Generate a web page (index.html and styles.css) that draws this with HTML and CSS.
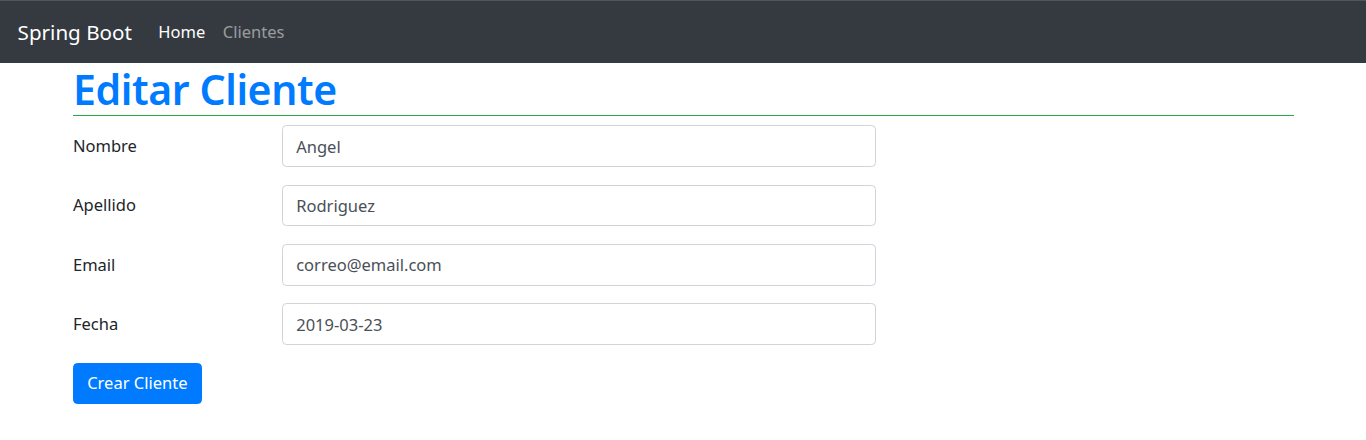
FILE: index.html
```html
<!DOCTYPE html>
<html lang="es">
<head>
<meta charset="utf-8">
<title>Editar Cliente</title>
<link rel="stylesheet" href="styles.css">
</head>
<body>
<nav class="navbar">
  <a class="brand" href="#">Spring Boot</a>
  <ul class="nav">
    <li><a class="nav-link active" href="#">Home</a></li>
    <li><a class="nav-link" href="#">Clientes</a></li>
  </ul>
</nav>
<main class="container">
  <h1 class="title">Editar Cliente</h1>
  <form class="form">
    <div class="row">
      <label class="label" for="nombre">Nombre</label>
      <div class="field"><input class="control" id="nombre" type="text" value="Angel"></div>
    </div>
    <div class="row">
      <label class="label" for="apellido">Apellido</label>
      <div class="field"><input class="control" id="apellido" type="text" value="Rodriguez"></div>
    </div>
    <div class="row">
      <label class="label" for="email">Email</label>
      <div class="field"><input class="control" id="email" type="text" value="correo@email.com"></div>
    </div>
    <div class="row">
      <label class="label" for="fecha">Fecha</label>
      <div class="field"><input class="control" id="fecha" type="text" value="2019-03-23"></div>
    </div>
    <div class="actions">
      <button class="btn" type="button">Crear Cliente</button>
    </div>
  </form>
</main>
</body>
</html>
```

FILE: styles.css
```css
* { box-sizing: border-box; }
html, body { margin: 0; padding: 0; }
body {
  font-family: "Noto Sans", "Open Sans", Arial, sans-serif;
  font-size: 16.5px;
  line-height: 26.4px;
  color: #212529;
  background: #fff;
}
.navbar {
  display: flex;
  align-items: center;
  background: #343a40;
  padding: 9.5px 17.6px 8.5px;
  height: 62.6px;
  border-top: 1px solid #50555b;
}
.brand {
  font-size: 20.6px;
  line-height: 33px;
  padding: 5.5px 0;
  margin-right: 17.6px;
  color: #fff;
  text-decoration: none;
}
.nav {
  display: flex;
  list-style: none;
  margin: 0;
  padding: 0;
}
.nav-link {
  display: block;
  padding: 8.8px;
  color: rgba(255,255,255,.5);
  text-decoration: none;
}
.nav-link.active { color: #fff; }
.container {
  width: 1221px;
  margin-left: 73px;
}
.title {
  margin: 0 0 8.8px;
  font-size: 41px;
  font-weight: 600;
  letter-spacing: -0.4px;
  line-height: 52.8px;
  color: #007bff;
  border-bottom: 1px solid #28a745;
}
.form { margin: 0; }
.row {
  display: flex;
  margin-bottom: 17.6px;
}
.label {
  width: 209px;
  padding-top: 7.7px;
  padding-bottom: 7.7px;
}
.field { width: 594px; }
.control {
  display: block;
  width: 100%;
  height: 41.8px;
  padding: 6.6px 13.2px;
  font-family: inherit;
  font-size: 16.5px;
  line-height: 26.4px;
  color: #495057;
  background: #fff;
  border: 1px solid #ced4da;
  border-radius: 4.4px;
  outline: none;
}
.actions { display: flex; }
.btn {
  font-family: inherit;
  font-size: 16.5px;
  line-height: 26.4px;
  padding: 6.6px 13.2px;
  color: #fff;
  background: #007bff;
  border: 1px solid #007bff;
  border-radius: 4.4px;
  cursor: pointer;
}
```
